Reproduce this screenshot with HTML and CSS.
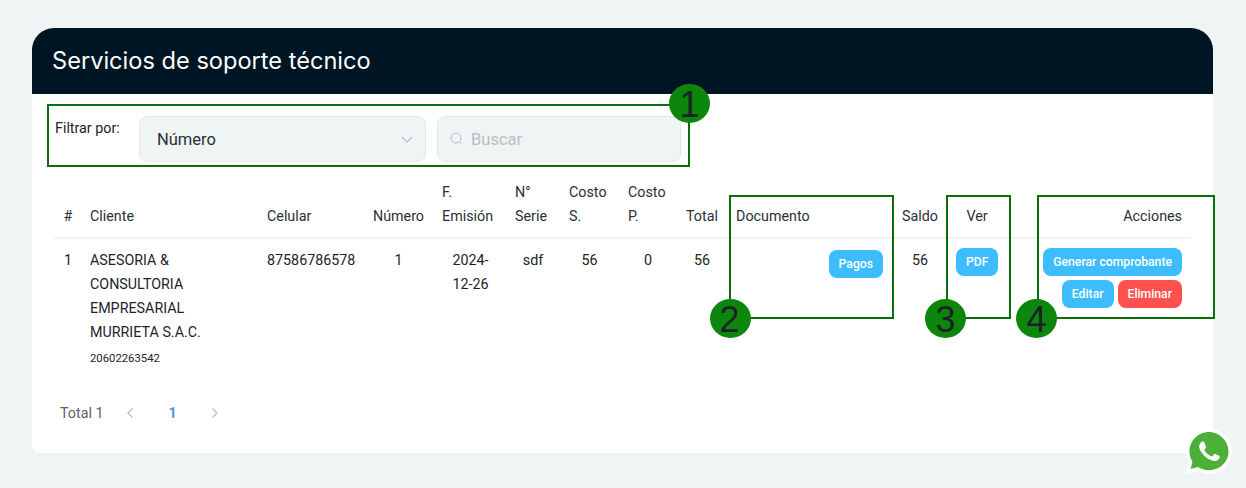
FILE: index.html
```html
<!DOCTYPE html>
<html lang="es">
<head>
<meta charset="utf-8">
<title>Servicios de soporte técnico</title>
<link rel="stylesheet" href="styles.css">
</head>
<body>
<main class="card">
  <header class="card-head"><h1>Servicios de soporte técnico</h1></header>
  <div class="filters">
    <label class="filter-label">Filtrar por:</label>
    <div class="field select"><span>Número</span>
      <svg class="chev" width="14" height="14" viewBox="0 0 14 14"><path d="M2 5l5 5 5-5" fill="none" stroke="#b4bcc4" stroke-width="1.1"/></svg>
    </div>
    <div class="field search">
      <svg width="16" height="16" viewBox="0 0 16 16"><circle cx="7" cy="7" r="5" fill="none" stroke="#b8bec4" stroke-width="1"/><path d="M10.500 10.800l2.200 2.200" stroke="#b8bec4" stroke-width="1"/></svg>
      <span>Buscar</span>
    </div>
  </div>
  <table class="grid">
    <colgroup>
      <col class="c-n"><col class="c-cli"><col class="c-cel"><col class="c-num"><col class="c-fec"><col class="c-ser"><col class="c-cs"><col class="c-cp"><col class="c-tot"><col class="c-doc"><col class="c-sal"><col class="c-ver"><col class="c-acc">
    </colgroup>
    <thead>
      <tr>
        <th class="mid">#</th><th>Cliente</th><th>Celular</th><th class="mid lean">Número</th><th>F. Emisión</th><th>N° Serie</th><th>Costo S.</th><th>Costo P.</th><th class="mid lean">Total</th><th>Documento</th><th class="mid lean">Saldo</th><th class="mid">Ver</th><th class="end">Acciones</th>
      </tr>
    </thead>
    <tbody>
      <tr>
        <td class="mid">1</td>
        <td>ASESORIA &amp; CONSULTORIA EMPRESARIAL MURRIETA S.A.C.<small>20602263542</small></td>
        <td>87586786578</td>
        <td class="mid lean">1</td>
        <td class="mid date">2024-12-26</td>
        <td class="mid lean">sdf</td>
        <td class="mid lean">56</td>
        <td class="mid lean">0</td>
        <td class="mid lean">56</td>
        <td class="end"><button class="btn low">Pagos</button></td>
        <td class="mid lean">56</td>
        <td class="mid btn-cell"><button class="btn">PDF</button></td>
        <td class="end actions btn-cell">
          <button class="btn">Generar comprobante</button>
          <button class="btn">Editar</button><button class="btn danger">Eliminar</button>
        </td>
      </tr>
    </tbody>
  </table>
  <nav class="pager">
    <span class="total">Total 1</span>
    <svg class="arrow" width="10" height="12" viewBox="0 0 10 12"><path d="M7.500 1.500L3 6l4.500 4.500" fill="none" stroke="#c0c4cc" stroke-width="1.600"/></svg>
    <span class="page">1</span>
    <svg class="arrow" width="10" height="12" viewBox="0 0 10 12"><path d="M2.500 1.500L7 6l-4.500 4.500" fill="none" stroke="#c0c4cc" stroke-width="1.600"/></svg>
  </nav>
</main>

<div class="mark m1"></div>
<div class="mark m2"></div>
<div class="mark m3"></div>
<div class="mark m4"></div>
<span class="dot d1">1</span>
<span class="dot d2">2</span>
<span class="dot d3">3</span>
<span class="dot d4">4</span>

<svg class="wa" width="48" height="48" viewBox="0 0 48 48">
  <path d="M24 2C11.300 2 1 12.200 1 24.500c0 4 1 7.700 2.900 11L1 47l12-3.300c3.200 1.800 6.900 3 11 3 12.700 0 23-10.100 23-22.500S36.700 2 24 2z" fill="#fff"/>
  <path d="M24 5C13.200 5 4.500 13.700 4.500 24.500c0 3.800 1.100 7.300 3 10.300L5.500 42l7.500-2c3.100 2 6.900 3.200 11 3.200 10.800 0 19.500-8.500 19.500-18.700S34.800 5 24 5z" fill="#4caf38"/>
  <g transform="translate(24 24) scale(.82) translate(-24 -23)">
    <path d="M16.500 11.500c-.6 0-1.500.2-2.300 1.100-.8.900-2.200 2.600-2.200 5.200 0 3 2.200 6 2.600 6.500.4.500 4.300 6.900 10.500 9.300 5.200 2 6.300 1.600 7.400 1.500 1.100-.1 3.600-1.500 4.100-2.900.5-1.400.5-2.700.4-2.900-.2-.3-.6-.4-1.200-.7-.6-.3-3.600-1.800-4.200-2-.6-.2-1-.3-1.400.3-.4.600-1.600 2-1.900 2.400-.4.400-.7.500-1.300.2-.6-.3-2.600-1-5-3.100-1.800-1.600-3.100-3.700-3.400-4.300-.4-.6 0-.9.300-1.300.3-.3.600-.7.900-1.100.3-.4.400-.6.600-1 .2-.4.100-.8 0-1.100-.2-.3-1.300-3.300-1.900-4.500-.4-1-.9-1.600-1.500-1.600z" fill="#fff"/>
  </g>
</svg>
</body>
</html>
```
FILE: styles.css
```css
* { box-sizing: border-box; }
html, body { margin: 0; height: 488px; overflow: hidden; }
body {
  position: relative;
  background: #eff4f4;
  padding: 28px 33px 0 32px;
  font-family: Roboto, "Liberation Sans", sans-serif;
  font-size: 14.3px;
  color: #1f2329;
}
.card {
  height: 425px;
  background: #fff;
  border-radius: 22px 22px 8px 8px;
  overflow: hidden;
}
.card-head {
  height: 66px;
  background: #001524;
  display: flex;
  align-items: center;
  padding: 0 20px 1px;
}
.card-head h1 {
  margin: 0;
  font: 400 23.600px Inter, sans-serif;
  color: #fff;
}
.filters {
  display: flex;
  padding: 22px 0 0 23px;
  height: 86px;
}
.filter-label { width: 84px; padding-top: 4px; line-height: 16px; }
.field {
  height: 46px;
  background: #eff4f4;
  border: 1px solid #dfe9e9;
  border-radius: 8px;
  display: flex;
  align-items: center;
}
.select {
  width: 287px;
  padding: 0 11px 0 17px;
  justify-content: space-between;
  font-size: 16.500px;
  color: #2a2f36;
}
.search {
  width: 244px;
  margin-left: 11px;
  padding-left: 11px;
  gap: 6px;
  font-size: 16.500px;
  color: #b9bdc1;
}
.grid {
  table-layout: fixed;
  border-collapse: collapse;
  width: 1137px;
  margin-left: 22px;
  line-height: 24px;
}
.c-n { width: 28px; } .c-cli { width: 177px; } .c-cel { width: 106px; }
.c-num { width: 69px; } .c-fec { width: 73px; } .c-ser { width: 54px; }
.c-cs { width: 59px; } .c-cp { width: 58px; } .c-tot { width: 50px; }
.c-doc { width: 166px; } .c-sal { width: 54px; } .c-ver { width: 58px; } .c-acc { width: 185px; }
th {
  font-weight: 400;
  text-align: left;
  vertical-align: bottom;
  padding: 0 8px 9px;
  border-bottom: 2px solid #eff4f4;
  color: #2b3038;
}
td { vertical-align: top; padding: 9px 8px 0; text-align: left; }
th.mid, td.mid { text-align: center; }
th.end, td.end { text-align: right; }
th.end { padding-right: 9px; }
th.mid { padding-left: 0; padding-right: 0; }
th.lean { padding-right: 2px; }
td.lean { padding-left: 6px; padding-right: 8px; }
td.date { padding-left: 16px; padding-right: 16px; }
small { display: block; font-size: 11.300px; line-height: 30px; }
.btn {
  border: 0;
  height: 28px;
  padding: 0 10px;
  border-radius: 8px;
  background: #3dbdff;
  color: #fff;
  font: 500 12.200px Roboto, sans-serif;
  vertical-align: top;
}
.low { margin: 2px 3px 0 0; }
.actions { line-height: 0; padding-right: 9px; }
.actions .btn { margin-left: 4px; margin-bottom: 4px; }
.danger { background: #ff5050; }
.pager {
  display: flex;
  align-items: center;
  padding: 0 0 0 28px;
  margin-top: 23px;
  height: 32px;
  color: #606266;
}
.total { width: 65px; }
.arrow { flex: none; }
.page { width: 75px; text-align: center; font-weight: 700; color: #4f94ea; }
.mark { position: absolute; border: 2px solid #0a6e0a; }
.m1 { left: 47px; top: 104px; width: 643px; height: 63px; }
.m2 { left: 729px; top: 195px; width: 165px; height: 124px; }
.m3 { left: 946px; top: 195px; width: 65px; height: 124px; }
.m4 { left: 1037px; top: 195px; width: 178px; height: 124px; }
.dot {
  position: absolute;
  width: 41px; height: 39px;
  border-radius: 50%;
  background: #0d860d;
  color: #1c2326;
  font: 400 36px/42px "Liberation Sans", sans-serif;
  text-align: center;
}
.d1 { left: 669px; top: 84px; }
.d2 { left: 710px; top: 299px; padding-right: 2px; }
.d3 { left: 925px; top: 299px; }
.d4 { left: 1016px; top: 299px; }
.wa { position: absolute; left: 1185px; top: 427px; }
```
